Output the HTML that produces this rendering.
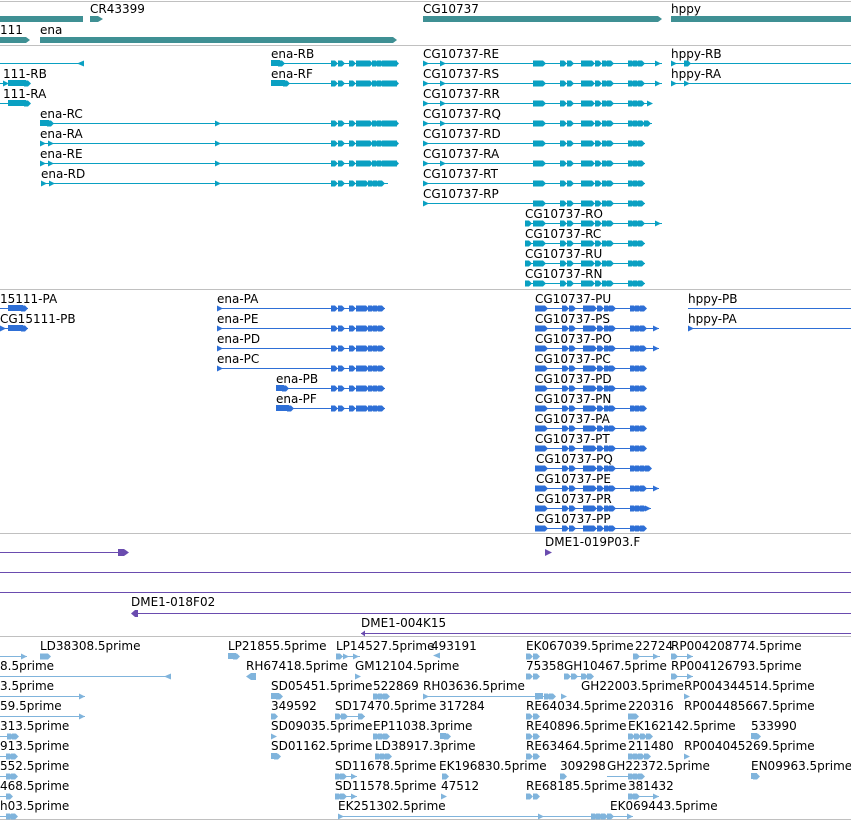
<!DOCTYPE html>
<html><head><meta charset="utf-8"><style>
html,body{margin:0;padding:0;background:#fff;width:851px;height:821px;overflow:hidden}
svg{display:block}
text{font-family:"DejaVu Sans","Liberation Sans",sans-serif;font-size:12px;fill:#000}
</style></head><body>
<svg width="851" height="821" viewBox="0 0 851 821" xmlns="http://www.w3.org/2000/svg">
<defs>
<path id="e" d="M0,-3h4l3,3l-3,3h-4z" fill="currentColor"/>
<path id="s" d="M0,-3l6,3l-6,3z" fill="currentColor"/>
<path id="lt" d="M7,-3l-7,3l7,3z" fill="currentColor"/>
<g id="cg">
<rect x="0" y="-3" width="8" height="6" fill="currentColor"/><use href="#e" x="6"/>
<use href="#e" x="27"/><use href="#e" x="34"/>
<rect x="48" y="-3" width="10" height="6" fill="currentColor"/><use href="#e" x="55"/><use href="#e" x="62"/><use href="#e" x="69"/><use href="#e" x="74"/>
<use href="#e" x="95"/><use href="#e" x="100"/><use href="#e" x="105"/>
</g>
<g id="en">
<use href="#e" x="0"/><use href="#e" x="7"/><use href="#e" x="18"/>
<rect x="25" y="-3" width="12" height="6" fill="currentColor"/><use href="#e" x="35"/><use href="#e" x="41"/><use href="#e" x="46"/><use href="#e" x="51"/>
<rect x="54" y="-3" width="10" height="6" fill="currentColor"/><use href="#e" x="61"/>
</g>
<g id="ep">
<use href="#e" x="0"/><use href="#e" x="7"/><use href="#e" x="18"/>
<rect x="25" y="-3" width="8" height="6" fill="currentColor"/><use href="#e" x="31"/><use href="#e" x="37"/><use href="#e" x="42"/><use href="#e" x="47"/>
</g>
</defs>

<!-- separators -->
<g fill="#c0c0c0">
<rect x="0" y="1" width="851" height="1"/><rect x="0" y="45" width="851" height="1"/>
<rect x="0" y="289" width="851" height="1"/><rect x="0" y="533" width="851" height="1"/>
<rect x="0" y="636" width="851" height="1"/><rect x="0" y="819" width="851" height="1"/>
</g>

<!-- genes -->
<g fill="#3f9094">
<rect x="0" y="16" width="83" height="6"/>
<path d="M90,16h8l5,3l-5,3h-8z"/>
<path d="M423,16h235l4,3l-4,3h-235z"/>
<rect x="671" y="16" width="180" height="6"/>
<path d="M0,37h26l4,3l-4,3h-26z"/>
<path d="M40,37h353l4,3l-4,3h-353z"/>
</g>
<text x="90" y="13">CR43399</text><text x="423" y="13">CG10737</text><text x="671" y="13">hppy</text>
<text x="0" y="34">111</text><text x="40" y="34">ena</text>

<!-- transcripts -->
<g color="#0aa0c2" fill="#0aa0c2">
<rect x="0" y="63" width="83" height="1"/><use href="#lt" x="77" y="63.5"/>
<rect x="271" y="63" width="126" height="1"/><rect x="271" y="60" width="9" height="6"/><use href="#e" x="278" y="63.5"/><use href="#en" x="331" y="63.5"/><rect x="390" y="60.5" width="7" height="6"/>
<rect x="271" y="83" width="126" height="1"/><rect x="271" y="80" width="14" height="6"/><use href="#e" x="283" y="83.5"/><use href="#en" x="331" y="83.5"/><rect x="390" y="80.5" width="7" height="6"/>
<rect x="0" y="83" width="30" height="1"/><rect x="8" y="80" width="18" height="6"/><use href="#e" x="24" y="83.5"/><use href="#s" x="3" y="83.5"/>
<rect x="0" y="103" width="30" height="1"/><rect x="8" y="100" width="18" height="6"/><use href="#e" x="24" y="103.5"/>
<rect x="40" y="123" width="357" height="1"/><rect x="40" y="120" width="9" height="6"/><use href="#e" x="47" y="123.5"/><use href="#s" x="215" y="123.5"/><use href="#en" x="331" y="123.5"/><rect x="390" y="120.5" width="7" height="6"/>
<rect x="40" y="143" width="357" height="1"/><use href="#s" x="40" y="143.5"/><use href="#s" x="48" y="143.5"/><use href="#s" x="215" y="143.5"/><use href="#en" x="331" y="143.5"/><rect x="390" y="140.5" width="7" height="6"/>
<rect x="40" y="163" width="357" height="1"/><use href="#s" x="40" y="163.5"/><use href="#s" x="48" y="163.5"/><use href="#s" x="215" y="163.5"/><use href="#en" x="331" y="163.5"/><rect x="390" y="160.5" width="7" height="6"/>
<rect x="41" y="183" width="347" height="1"/><use href="#s" x="41" y="183.5"/><use href="#s" x="49" y="183.5"/><use href="#s" x="215" y="183.5"/><use href="#ep" x="331" y="183.5"/>

<rect x="423" y="63" width="239" height="1"/><use href="#s" x="423" y="63.5"/><use href="#s" x="440" y="63.5"/><use href="#cg" x="533" y="63.5"/><use href="#s" x="655" y="63.5"/>
<rect x="423" y="83" width="239" height="1"/><use href="#s" x="423" y="83.5"/><use href="#s" x="440" y="83.5"/><use href="#cg" x="533" y="83.5"/><use href="#s" x="655" y="83.5"/>
<rect x="423" y="103" width="229" height="1"/><use href="#s" x="423" y="103.5"/><use href="#s" x="440" y="103.5"/><use href="#cg" x="533" y="103.5"/><use href="#s" x="647" y="103.5"/>
<rect x="423" y="123" width="229" height="1"/><use href="#s" x="423" y="123.5"/><use href="#s" x="440" y="123.5"/><use href="#cg" x="533" y="123.5"/><use href="#e" x="644" y="123.5"/>
<rect x="423" y="143" width="222" height="1"/><use href="#s" x="423" y="143.5"/><use href="#cg" x="533" y="143.5"/>
<rect x="423" y="163" width="222" height="1"/><use href="#s" x="423" y="163.5"/><use href="#s" x="440" y="163.5"/><use href="#cg" x="533" y="163.5"/>
<rect x="423" y="183" width="222" height="1"/><use href="#s" x="423" y="183.5"/><use href="#cg" x="533" y="183.5"/>
<rect x="423" y="203" width="222" height="1"/><use href="#s" x="423" y="203.5"/><use href="#cg" x="533" y="203.5"/>
<rect x="525" y="223" width="137" height="1"/><use href="#e" x="525" y="223.5"/><use href="#cg" x="533" y="223.5"/><use href="#s" x="655" y="223.5"/>
<rect x="525" y="243" width="120" height="1"/><use href="#e" x="525" y="243.5"/><use href="#cg" x="533" y="243.5"/>
<rect x="525" y="263" width="120" height="1"/><use href="#e" x="525" y="263.5"/><use href="#cg" x="533" y="263.5"/>
<rect x="525" y="283" width="120" height="1"/><use href="#e" x="525" y="283.5"/><use href="#cg" x="533" y="283.5"/>

<rect x="671" y="63" width="180" height="1"/><use href="#s" x="671" y="63.5"/><use href="#e" x="684" y="63.5"/>
<rect x="671" y="83" width="180" height="1"/><use href="#s" x="671" y="83.5"/><use href="#s" x="684" y="83.5"/>
</g>
<text x="271" y="58">ena-RB</text><text x="271" y="78">ena-RF</text>
<text x="3" y="78">111-RB</text><text x="3" y="98">111-RA</text>
<text x="40" y="118">ena-RC</text><text x="40" y="138">ena-RA</text><text x="40" y="158">ena-RE</text><text x="41" y="178">ena-RD</text>
<text x="423" y="58">CG10737-RE</text><text x="423" y="78">CG10737-RS</text><text x="423" y="98">CG10737-RR</text><text x="423" y="118">CG10737-RQ</text>
<text x="423" y="138">CG10737-RD</text><text x="423" y="158">CG10737-RA</text><text x="423" y="178">CG10737-RT</text><text x="423" y="198">CG10737-RP</text>
<text x="525" y="218">CG10737-RO</text><text x="525" y="238">CG10737-RC</text><text x="525" y="258">CG10737-RU</text><text x="525" y="278">CG10737-RN</text>
<text x="671" y="58">hppy-RB</text><text x="671" y="78">hppy-RA</text>

<!-- proteins -->
<g color="#2e6fd6" fill="#2e6fd6">
<rect x="0" y="308" width="28" height="1"/><rect x="8" y="305" width="15" height="6"/><use href="#e" x="21" y="308.5"/>
<rect x="0" y="328" width="28" height="1"/><use href="#s" x="0" y="328.5"/><rect x="8" y="325" width="15" height="6"/><use href="#e" x="21" y="328.5"/>
<rect x="217" y="308" width="168" height="1"/><use href="#s" x="217" y="308.5"/><use href="#ep" x="331" y="308.5"/>
<rect x="217" y="328" width="168" height="1"/><use href="#s" x="217" y="328.5"/><use href="#ep" x="331" y="328.5"/>
<rect x="217" y="348" width="168" height="1"/><use href="#s" x="217" y="348.5"/><use href="#ep" x="331" y="348.5"/>
<rect x="217" y="368" width="168" height="1"/><use href="#s" x="217" y="368.5"/><use href="#ep" x="331" y="368.5"/>
<rect x="276" y="388" width="109" height="1"/><rect x="276" y="385" width="8" height="6"/><use href="#e" x="282" y="388.5"/><use href="#ep" x="331" y="388.5"/>
<rect x="276" y="408" width="109" height="1"/><rect x="276" y="405" width="13" height="6"/><use href="#e" x="287" y="408.5"/><use href="#ep" x="331" y="408.5"/>
<g id="pu"></g>
<rect x="535" y="308" width="110" height="1"/><use href="#cg" x="535" y="308.5"/>
<rect x="535" y="328" width="124" height="1"/><use href="#cg" x="535" y="328.5"/><use href="#s" x="653" y="328.5"/>
<rect x="535" y="348" width="124" height="1"/><use href="#cg" x="535" y="348.5"/><use href="#s" x="653" y="348.5"/>
<rect x="535" y="368" width="110" height="1"/><use href="#cg" x="535" y="368.5"/>
<rect x="535" y="388" width="110" height="1"/><use href="#cg" x="535" y="388.5"/>
<rect x="535" y="408" width="110" height="1"/><use href="#cg" x="535" y="408.5"/>
<rect x="535" y="428" width="110" height="1"/><use href="#cg" x="535" y="428.5"/>
<rect x="535" y="448" width="110" height="1"/><use href="#cg" x="535" y="448.5"/>
<rect x="535" y="468" width="116" height="1"/><use href="#cg" x="535" y="468.5"/><use href="#e" x="645" y="468.5"/>
<rect x="535" y="488" width="124" height="1"/><use href="#cg" x="535" y="488.5"/><use href="#s" x="653" y="488.5"/>
<rect x="535" y="508" width="116" height="1"/><use href="#cg" x="535" y="508.5"/><use href="#s" x="645" y="508.5"/>
<rect x="535" y="528" width="110" height="1"/><use href="#cg" x="535" y="528.5"/>
<rect x="688" y="308" width="163" height="1"/>
<rect x="688" y="328" width="163" height="1"/><use href="#s" x="688" y="328.5"/>
</g>
<text x="0" y="303">15111-PA</text><text x="0" y="323">CG15111-PB</text>
<text x="217" y="303">ena-PA</text><text x="217" y="323">ena-PE</text><text x="217" y="343">ena-PD</text><text x="217" y="363">ena-PC</text>
<text x="276" y="383">ena-PB</text><text x="276" y="403">ena-PF</text>
<text x="535" y="303">CG10737-PU</text><text x="535" y="323">CG10737-PS</text><text x="535" y="343">CG10737-PO</text><text x="535" y="363">CG10737-PC</text>
<text x="535" y="383">CG10737-PD</text><text x="535" y="403">CG10737-PN</text><text x="535" y="423">CG10737-PA</text><text x="535" y="443">CG10737-PT</text>
<text x="536" y="463">CG10737-PQ</text><text x="536" y="483">CG10737-PE</text><text x="536" y="503">CG10737-PR</text><text x="536" y="523">CG10737-PP</text>
<text x="688" y="303">hppy-PB</text><text x="688" y="323">hppy-PA</text>

<!-- clones -->
<g fill="#6a4caf" color="#6a4caf">
<rect x="0" y="552" width="122" height="1"/><path d="M118,549h6l5,3.5l-5,3.5h-6z"/>
<path d="M545,549l7,3.5l-7,3.5z"/>
<rect x="0" y="572" width="851" height="1"/>
<rect x="0" y="592" width="851" height="1"/>
<rect x="135" y="613" width="716" height="1"/><path d="M138,610h-3l-4,3.5l4,3.5h3z"/>
<rect x="361" y="633" width="490" height="1"/><path d="M365,630.5l-4,3l4,3z"/>
</g>
<text x="545" y="546">DME1-019P03.F</text>
<text x="131" y="606">DME1-018F02</text>
<text x="361" y="627">DME1-004K15</text>

<!-- ESTs -->
<g fill="#80b4dc" color="#80b4dc">
<rect x="0" y="656" width="27" height="1"/><use href="#s" x="21" y="656.5"/>
<use href="#e" x="40" y="656.5"/><use href="#e" x="44" y="656.5"/>
<rect x="228" y="653" width="8" height="6"/><use href="#e" x="233" y="656.5"/>
<rect x="336" y="656" width="24" height="1"/><use href="#e" x="336" y="656.5"/><use href="#s" x="343" y="656.5"/><use href="#s" x="353" y="656.5"/>
<use href="#lt" x="433" y="655.5"/>
<use href="#e" x="526" y="656.5"/><use href="#e" x="533" y="656.5"/>
<rect x="633" y="656" width="27" height="1"/><use href="#e" x="633" y="656.5"/><use href="#s" x="653" y="656.5"/>
<rect x="671" y="656" width="22" height="1"/><use href="#e" x="671" y="656.5"/><use href="#s" x="687" y="656.5"/>

<rect x="0" y="676" width="170" height="1"/><use href="#lt" x="164" y="676.5"/>
<path d="M256,673h-5l-5,3.5l5,3.5h5z"/>
<use href="#s" x="355" y="676.5"/>
<use href="#e" x="526" y="676.5"/><use href="#e" x="533" y="676.5"/>
<rect x="564" y="676" width="28" height="1"/><use href="#e" x="564" y="676.5"/><use href="#e" x="571" y="676.5"/><use href="#e" x="581" y="676.5"/><use href="#e" x="587" y="676.5"/>
<rect x="671" y="676" width="22" height="1"/><use href="#e" x="671" y="676.5"/><use href="#s" x="687" y="676.5"/>

<rect x="0" y="696" width="85" height="1"/><use href="#s" x="79" y="696.5"/>
<rect x="271" y="693" width="8" height="6"/><use href="#e" x="276" y="696.5"/>
<use href="#e" x="373" y="696.5"/><use href="#e" x="378" y="696.5"/><use href="#e" x="383" y="696.5"/>
<rect x="423" y="696" width="122" height="1"/><use href="#s" x="423" y="696.5"/><use href="#e" x="535" y="696.5"/>
<rect x="535" y="693" width="8" height="6"/><use href="#e" x="544" y="696.5"/><use href="#e" x="549" y="696.5"/><use href="#s" x="561" y="696.5"/>
<use href="#s" x="684" y="696.5"/>

<rect x="0" y="716" width="85" height="1"/><use href="#s" x="79" y="716.5"/>
<use href="#e" x="271" y="716.5"/>
<rect x="335" y="716" width="30" height="1"/><use href="#e" x="335" y="716.5"/><use href="#e" x="341" y="716.5"/><use href="#e" x="358" y="716.5"/>
<use href="#e" x="526" y="716.5"/><use href="#e" x="533" y="716.5"/>
<use href="#e" x="628" y="716.5"/><use href="#e" x="632" y="716.5"/>

<rect x="0" y="736" width="12" height="1"/><use href="#e" x="7" y="736.5"/><use href="#e" x="12" y="736.5"/>
<use href="#s" x="271" y="736.5"/>
<use href="#e" x="373" y="736.5"/><use href="#e" x="378" y="736.5"/><use href="#e" x="383" y="736.5"/>
<rect x="440" y="733" width="6" height="6"/><use href="#e" x="444" y="736.5"/>
<use href="#e" x="526" y="736.5"/><use href="#e" x="533" y="736.5"/>
<use href="#e" x="628" y="736.5"/><use href="#e" x="634" y="736.5"/><use href="#e" x="640" y="736.5"/><use href="#e" x="646" y="736.5"/>
<rect x="751" y="733" width="6" height="6"/><use href="#e" x="754" y="736.5"/>

<rect x="0" y="756" width="12" height="1"/><use href="#e" x="6" y="756.5"/><use href="#e" x="11" y="756.5"/>
<rect x="271" y="753" width="6" height="6"/><use href="#e" x="274" y="756.5"/>
<use href="#e" x="375" y="756.5"/><use href="#e" x="380" y="756.5"/><use href="#e" x="385" y="756.5"/>
<use href="#e" x="526" y="756.5"/><use href="#e" x="533" y="756.5"/>
<use href="#e" x="628" y="756.5"/><use href="#e" x="633" y="756.5"/><use href="#e" x="638" y="756.5"/><use href="#e" x="644" y="756.5"/>
<use href="#s" x="684" y="756.5"/>

<rect x="0" y="776" width="12" height="1"/><use href="#e" x="6" y="776.5"/><use href="#e" x="11" y="776.5"/>
<rect x="335" y="776" width="22" height="1"/><use href="#e" x="335" y="776.5"/><use href="#e" x="340" y="776.5"/><use href="#s" x="351" y="776.5"/>
<use href="#e" x="442" y="776.5"/>
<use href="#e" x="560" y="776.5"/>
<rect x="607" y="776" width="28" height="1"/><use href="#e" x="628" y="776.5"/><use href="#e" x="633" y="776.5"/><use href="#e" x="638" y="776.5"/>
<rect x="751" y="773" width="6" height="6"/><use href="#e" x="753" y="776.5"/>

<rect x="0" y="796" width="12" height="1"/><use href="#e" x="6" y="796.5"/>
<rect x="335" y="796" width="22" height="1"/><use href="#e" x="335" y="796.5"/><use href="#e" x="340" y="796.5"/><use href="#s" x="351" y="796.5"/>
<use href="#s" x="441" y="796.5"/>
<use href="#e" x="526" y="796.5"/><use href="#e" x="533" y="796.5"/>
<rect x="628" y="796" width="31" height="1"/><use href="#e" x="628" y="796.5"/><use href="#e" x="633" y="796.5"/><use href="#s" x="653" y="796.5"/>

<rect x="0" y="816" width="12" height="1"/><use href="#e" x="6" y="816.5"/><use href="#e" x="11" y="816.5"/>
<rect x="338" y="816" width="295" height="1"/><use href="#s" x="338" y="816.5"/><use href="#s" x="538" y="816.5"/>
<use href="#e" x="591" y="816.5"/><use href="#e" x="596" y="816.5"/><use href="#e" x="601" y="816.5"/><use href="#e" x="607" y="816.5"/><use href="#s" x="627" y="816.5"/>
</g>
<text x="40" y="650">LD38308.5prime</text><text x="228" y="650">LP21855.5prime</text><text x="336" y="650">LP14527.5prime</text><text x="431" y="650">493191</text>
<text x="526" y="650">EK067039.5prime</text><text x="635" y="650">22724</text><text x="671" y="650">RP004208774.5prime</text>
<text x="0" y="670">8.5prime</text><text x="246" y="670">RH67418.5prime</text><text x="355" y="670">GM12104.5prime</text><text x="526" y="670">75358</text><text x="564" y="670">GH10467.5prime</text><text x="671" y="670">RP004126793.5prime</text>
<text x="0" y="690">3.5prime</text><text x="271" y="690">SD05451.5prime</text><text x="373" y="690">522869</text><text x="423" y="690">RH03636.5prime</text><text x="581" y="690">GH22003.5prime</text><text x="684" y="690">RP004344514.5prime</text>
<text x="0" y="710">59.5prime</text><text x="271" y="710">349592</text><text x="335" y="710">SD17470.5prime</text><text x="439" y="710">317284</text><text x="526" y="710">RE64034.5prime</text><text x="628" y="710">220316</text><text x="684" y="710">RP004485667.5prime</text>
<text x="0" y="730">313.5prime</text><text x="271" y="730">SD09035.5prime</text><text x="373" y="730">EP11038.3prime</text><text x="526" y="730">RE40896.5prime</text><text x="628" y="730">EK162142.5prime</text><text x="751" y="730">533990</text>
<text x="0" y="750">913.5prime</text><text x="271" y="750">SD01162.5prime</text><text x="375" y="750">LD38917.3prime</text><text x="526" y="750">RE63464.5prime</text><text x="628" y="750">211480</text><text x="684" y="750">RP004045269.5prime</text>
<text x="0" y="770">552.5prime</text><text x="335" y="770">SD11678.5prime</text><text x="439" y="770">EK196830.5prime</text><text x="560" y="770">309298</text><text x="607" y="770">GH22372.5prime</text><text x="751" y="770">EN09963.5prime</text>
<text x="0" y="790">468.5prime</text><text x="335" y="790">SD11578.5prime</text><text x="441" y="790">47512</text><text x="526" y="790">RE68185.5prime</text><text x="628" y="790">381432</text>
<text x="0" y="810">h03.5prime</text><text x="338" y="810">EK251302.5prime</text><text x="610" y="810">EK069443.5prime</text>
</svg>
</body></html>
